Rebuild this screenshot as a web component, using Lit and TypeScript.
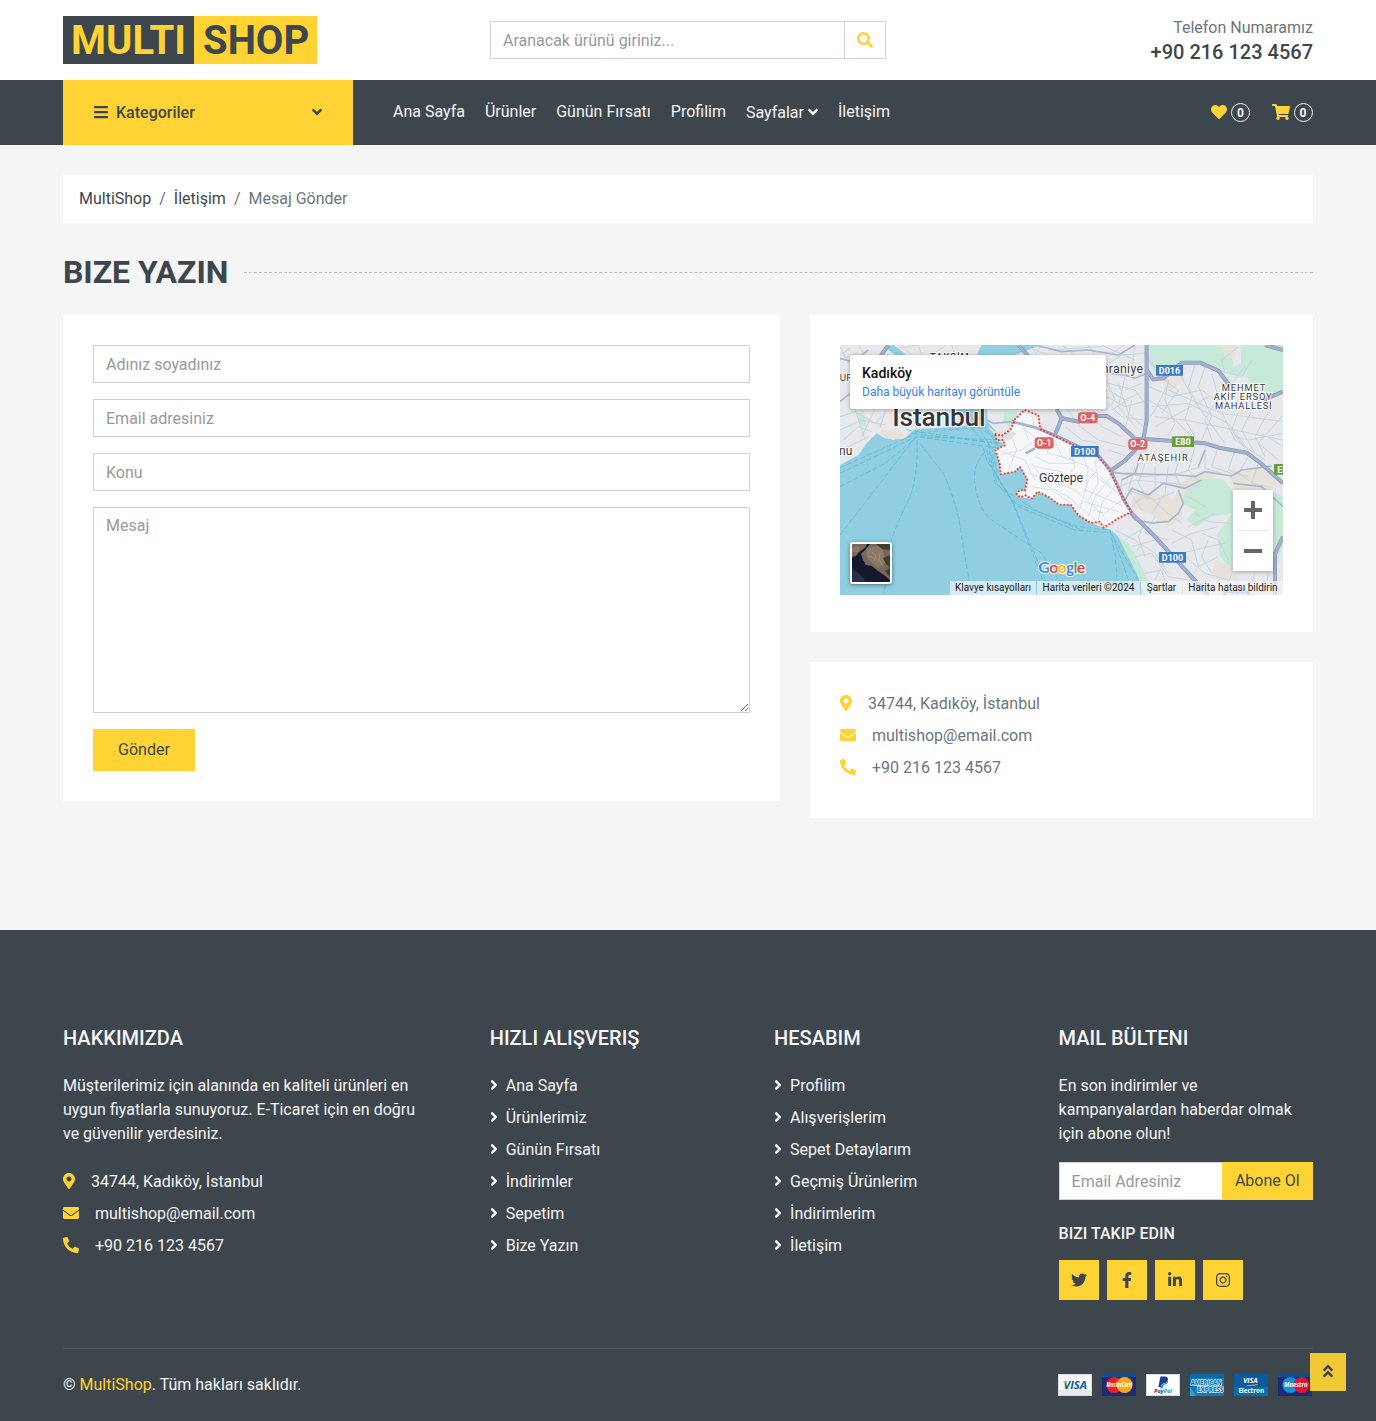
import { LitElement, html, svg, css } from "lit";
import { customElement, property } from "lit/decorators.js";

interface Glyph { w: number; d: string }

const GLYPHS: Record<string, Glyph> = {
  bars: { w: 448, d: "M16 132h416c8.837 0 16-7.163 16-16V76c0-8.837-7.163-16-16-16H16C7.163 60 0 67.163 0 76v40c0 8.837 7.163 16 16 16zm0 160h416c8.837 0 16-7.163 16-16v-40c0-8.837-7.163-16-16-16H16c-8.837 0-16 7.163-16 16v40c0 8.837 7.163 16 16 16zm0 160h416c8.837 0 16-7.163 16-16v-40c0-8.837-7.163-16-16-16H16c-8.837 0-16 7.163-16 16v40c0 8.837 7.163 16 16 16z" },
  search: { w: 512, d: "M505 442.7L405.3 343c-4.5-4.5-10.6-7-17-7H372c27.6-35.3 44-79.7 44-128C416 93.1 322.9 0 208 0S0 93.1 0 208s93.1 208 208 208c48.3 0 92.7-16.4 128-44v16.3c0 6.4 2.5 12.5 7 17l99.7 99.7c9.4 9.4 24.6 9.4 33.9 0l28.3-28.3c9.4-9.4 9.4-24.6.1-34zM208 336c-70.7 0-128-57.2-128-128 0-70.7 57.2-128 128-128 70.7 0 128 57.2 128 128 0 70.7-57.2 128-128 128z" },
  down: { w: 320, d: "M143 352.3L7 216.3c-9.4-9.4-9.4-24.6 0-33.9l22.6-22.6c9.4-9.4 24.6-9.4 33.9 0l96.4 96.4 96.4-96.4c9.4-9.4 24.6-9.4 33.9 0l22.6 22.6c9.4 9.4 9.4 24.6 0 33.9l-136 136c-9.2 9.4-24.4 9.4-33.8 0z" },
  right: { w: 256, d: "M224.3 273l-136 136c-9.4 9.4-24.6 9.4-33.9 0l-22.6-22.6c-9.4-9.4-9.4-24.6 0-33.9l96.4-96.4-96.4-96.4c-9.4-9.4-9.4-24.6 0-33.9L54.3 103c9.4-9.4 24.6-9.4 33.9 0l136 136c9.5 9.4 9.5 24.6.1 34z" },
  heart: { w: 512, d: "M462.3 62.6C407.5 15.9 326 24.3 275.7 76.2L256 96.5l-19.7-20.3C186.1 24.3 104.5 15.9 49.7 62.6c-62.8 53.6-66.1 149.8-9.9 207.9l193.5 199.8c12.5 12.9 32.8 12.9 45.3 0l193.5-199.8c56.3-58.1 53-154.3-9.8-207.9z" },
  cart: { w: 576, d: "M528.12 301.319l47.273-208C578.806 78.301 567.391 64 551.99 64H159.208l-9.166-44.81C147.758 8.021 137.93 0 126.529 0H24C10.745 0 0 10.745 0 24v16c0 13.255 10.745 24 24 24h69.883l70.248 343.435C147.325 417.1 136 435.222 136 456c0 30.928 25.072 56 56 56s56-25.072 56-56c0-15.674-6.447-29.835-16.824-40h209.647C430.447 426.165 424 440.326 424 456c0 30.928 25.072 56 56 56s56-25.072 56-56c0-22.172-12.888-41.332-31.579-50.405l5.517-24.276c3.413-15.018-8.002-29.319-23.403-29.319H218.117l-6.545-32h293.145c11.206 0 20.92-7.754 23.403-18.681z" },
  marker: { w: 384, d: "M172.268 501.67C26.97 291.031 0 269.413 0 192 0 85.961 85.961 0 192 0s192 85.961 192 192c0 77.413-26.97 99.031-172.268 309.67-9.535 13.774-29.93 13.773-39.464 0zM192 272c44.183 0 80-35.817 80-80s-35.817-80-80-80-80 35.817-80 80 35.817 80 80 80z" },
  mail: { w: 512, d: "M502.3 190.8c3.9-3.1 9.7-.2 9.7 4.7V400c0 26.5-21.5 48-48 48H48c-26.5 0-48-21.5-48-48V195.6c0-5 5.7-7.8 9.7-4.7 22.4 17.4 52.1 39.5 154.1 113.6 21.1 15.4 56.7 47.8 92.2 47.6 35.7.3 72-32.8 92.3-47.6 102-74.1 131.6-96.3 154-113.7zM256 320c23.2.4 56.6-29.2 73.4-41.4 132.7-96.3 142.8-104.7 173.4-128.7 5.8-4.5 9.2-11.5 9.2-18.9v-19c0-26.5-21.5-48-48-48H48c-26.5 0-48 21.5-48 48v19c0 7.4 3.4 14.3 9.2 18.9 30.6 23.9 40.7 32.4 173.4 128.7 16.8 12.2 50.2 41.8 73.4 41.4z" },
  phone: { w: 512, d: "M497.39 361.8l-112-48a24 24 0 0 0-28 6.9l-49.6 60.6A370.66 370.66 0 0 1 130.6 204.11l60.6-49.6a23.94 23.94 0 0 0 6.9-28l-48-112A24.16 24.16 0 0 0 122.6.61l-104 24A24 24 0 0 0 0 48c0 256.5 207.9 464 464 464a24 24 0 0 0 23.4-18.6l24-104a24.29 24.29 0 0 0-14.01-27.6z" },
  twitter: { w: 512, d: "M459.37 151.716c.325 4.548.325 9.097.325 13.645 0 138.72-105.583 298.558-298.558 298.558-59.452 0-114.68-17.219-161.137-47.106 8.447.974 16.568 1.299 25.34 1.299 49.055 0 94.213-16.568 130.274-44.832-46.132-.975-84.792-31.188-98.112-72.772 6.498.974 12.995 1.624 19.818 1.624 9.421 0 18.843-1.3 27.614-3.573-48.081-9.747-84.143-51.98-84.143-102.985v-1.299c13.969 7.797 30.214 12.67 47.431 13.319-28.264-18.843-46.781-51.005-46.781-87.391 0-19.492 5.197-37.36 14.294-52.954 51.655 63.675 129.3 105.258 216.365 109.807-1.624-7.797-2.599-15.918-2.599-24.04 0-57.828 46.782-104.934 104.934-104.934 30.213 0 57.502 12.67 76.67 33.137 23.715-4.548 46.456-13.32 66.599-25.34-7.798 24.366-24.366 44.833-46.132 57.827 21.117-2.273 41.584-8.122 60.426-16.243-14.292 20.791-32.161 39.308-52.628 54.253z" },
  facebook: { w: 320, d: "M279.14 288l14.22-92.66h-88.91v-60.13c0-25.35 12.42-50.06 52.24-50.06h40.42V6.26S260.43 0 225.36 0c-73.22 0-121.08 44.38-121.08 124.72v70.62H22.89V288h81.39v224h100.17V288z" },
  linkedin: { w: 448, d: "M100.28 448H7.4V148.9h92.88zM53.79 108.1C24.09 108.1 0 83.5 0 53.8a53.79 53.79 0 0 1 107.58 0c0 29.7-24.1 54.3-53.79 54.3zM447.9 448h-92.68V302.4c0-34.7-.7-79.2-48.29-79.2-48.29 0-55.69 37.7-55.69 76.7V448h-92.78V148.9h89.08v40.8h1.3c12.4-23.5 42.69-48.3 87.88-48.3 94 0 111.28 61.9 111.28 142.3V448z" },
  instagram: { w: 448, d: "M224.1 141c-63.6 0-114.9 51.3-114.9 114.9s51.3 114.9 114.9 114.9S339 319.5 339 255.9 287.7 141 224.1 141zm0 189.6c-41.1 0-74.7-33.5-74.7-74.7s33.5-74.7 74.7-74.7 74.7 33.5 74.7 74.7-33.6 74.7-74.7 74.7zm146.4-194.3c0 14.9-12 26.8-26.8 26.8-14.9 0-26.8-12-26.8-26.8s12-26.8 26.8-26.8 26.8 12 26.8 26.8zm76.1 27.2c-1.7-35.9-9.9-67.7-36.2-93.9-26.2-26.2-58-34.4-93.9-36.2-37-2.1-147.9-2.1-184.9 0-35.8 1.7-67.6 9.9-93.9 36.1s-34.4 58-36.2 93.9c-2.1 37-2.1 147.9 0 184.9 1.7 35.9 9.9 67.7 36.2 93.9s58 34.4 93.9 36.2c37 2.1 147.9 2.1 184.9 0 35.9-1.7 67.7-9.9 93.9-36.2 26.2-26.2 34.4-58 36.2-93.9 2.1-37 2.1-147.8 0-184.8zM398.8 388c-7.8 19.6-22.9 34.7-42.6 42.6-29.5 11.7-99.5 9-132.1 9s-102.7 2.6-132.1-9c-19.6-7.8-34.7-22.9-42.6-42.6-11.7-29.5-9-99.5-9-132.1s-2.6-102.7 9-132.1c7.8-19.6 22.9-34.7 42.6-42.6 29.5-11.7 99.5-9 132.1-9s102.7-2.6 132.1 9c19.6 7.8 34.7 22.9 42.6 42.6 11.7 29.5 9 99.5 9 132.1s2.7 102.7-9 132.1z" },
  up2: { w: 320, d: "M177 255.7l136 136c9.4 9.4 9.4 24.6 0 33.9l-22.6 22.6c-9.4 9.4-24.6 9.4-33.9 0L160 351.9l-96.4 96.4c-9.4 9.4-24.6 9.4-33.9 0L7 425.7c-9.4-9.4-9.4-24.6 0-33.9l136-136c9.4-9.5 24.6-9.5 34-.1zm-34-192L7 199.7c-9.4 9.4-9.4 24.6 0 33.9l22.6 22.6c9.4 9.4 24.6 9.4 33.9 0l96.4-96.4 96.4 96.4c9.4 9.4 24.6 9.4 33.9 0l22.6-22.6c9.4-9.4 9.4-24.6 0-33.9l-136-136c-9.2-9.4-24.4-9.4-33.8 0z" },
};

@customElement("ms-icon")
class MsIcon extends LitElement {
  @property() name = "";
  static styles = css`
    :host { display: inline-block; line-height: 1; vertical-align: -2px; padding-bottom: 2px; }
    .glyph { display: block; height: 16px; fill: currentColor; overflow: visible; }
  `;
  render() {
    const g = GLYPHS[this.name];
    return html`<svg class="glyph" viewBox="0 0 ${g.w} 512" width=${g.w / 32} height="16"><path d=${g.d}></path></svg>`;
  }
}

const DISTRICT =
  "M482 282 L500 288 L527 268 L540 238 L568 210 L590 218 L610 226 L616 268 L664 290 L712 314 L790 350 L820 385 L840 425 L862 470 L889 516 L850 535 L806 563 L794 545 L768 549 L730 526 L708 495 L672 494 L640 470 L608 455 L590 476 L572 466 L556 472 L545 462 L555 450 L570 452 L577 418 L555 381 L540 395 L497 403 L494 370 L481 330 L510 316 L505 300 L484 300 Z";

const STREETS = [
  "M15 60L60 40L120 60M20 115L45 90M15 230L60 215L120 250L160 210M25 300L70 260L110 275M15 270L80 240L150 255M60 207L90 300M120 207L80 290M15 330L60 310L100 290M150 215L135 262M190 25L250 15L260 45M290 45L330 18M15 20L40 70M70 15L90 45M200 15L230 45M350 15L360 45M15 45L45 25",
  "M560 15L640 45M620 15L600 45M680 15L720 45M640 30L800 20M760 15L780 45M820 45L870 15M800 15L900 60M815 75L860 45L930 40M820 130L900 150L930 190M815 170L870 200L925 185M820 190L860 230L925 240M815 120L840 180L815 210M850 130L880 220L925 260M870 110L850 200L900 260M760 210L800 260L860 290M700 210L720 240M730 255L790 300L870 320M690 260L740 300L790 310M870 150L920 130M890 180L870 270M820 150L870 180L910 160M830 210L880 180M900 20L890 80L925 90",
  "M942 60L1000 130L960 210L945 230M942 140L1010 170L1100 150L1140 180M942 180L1000 220L1080 300M950 200L1060 190L1180 250L1240 330M960 230L1050 240L1150 260L1344 300M1000 120L990 180L1020 250L1000 290M1040 110L1070 170L1050 240L1080 290M1080 75L1060 140L1090 200L1170 310M1110 80L1090 140L1130 230L1100 300M1130 100L1150 170L1110 240L1130 300M1000 150L1160 220L1344 245M1160 215L1200 300L1290 360M1210 215L1190 270L1230 325M1250 215L1220 270L1260 340M1300 215L1260 290L1290 350M1344 225L1270 310L1330 360M1170 100L1160 60L1210 20M1150 90L1220 110L1250 60M1190 130L1230 80M1120 170L1050 210L960 260M1344 280L1240 300L1200 290M1344 320L1280 280M960 100L1030 150L980 220",
  "M820 330L880 350L940 330M850 400L930 410L1030 400L1100 380M830 450L900 420L1010 430L1100 440M860 420L850 500M900 380L880 450L920 510M930 370L910 430L940 480M960 380L960 450L900 490M1000 380L990 460L950 520M1040 330L1020 400L1040 450M1080 320L1060 390L1100 430M1110 320L1110 385L1160 400M1150 320L1130 380L1190 400M1200 330L1180 390L1240 410M1240 350L1210 400L1270 440M1270 370L1250 430L1300 440M880 450L960 480L1020 455M890 500L930 460L1000 520L1040 550M960 530L930 580L1000 600M840 570L900 600L960 640L1000 700M870 600L930 560M890 620L960 600L1000 640L960 720M900 650L950 640L1000 710L1060 720M930 700L980 690L1000 760M1010 570L1070 600L1090 680M1060 560L1100 540L1140 520M1100 580L1150 600L1180 660M1010 610L1070 580L1150 560M1040 640L1120 620L1170 610M1050 650L1110 700L1180 720M1120 600L1100 650L1130 700M1150 650L1090 680L1040 760M1190 700L1170 760M1260 700L1240 760M1300 700L1290 760M1080 520L1120 545L1190 550M1110 500L1060 470M930 545L910 590L930 650",
];

const DISTRICT_STREETS =
  "M497 345L560 330L600 300M520 390L545 330L530 290M490 330L530 345L570 360L600 420M560 260L610 300L650 330M560 240L580 300M590 225L600 270M620 290L640 340L720 360M660 300L680 350L760 380L830 440M700 320L720 380L700 410M740 340L760 390L750 460M780 360L790 430L760 480M800 375L760 420L730 520M830 410L780 470L760 530M840 440L800 490L790 540M860 480L810 520L770 510M600 350L640 370L720 370M590 370L640 440L700 470L780 540M580 400L640 420L720 450L800 520L820 545M590 440L650 450L710 490M740 445L870 500M770 400L850 460M745 485L850 515M600 380L680 395";

const FERRY = [
  "M15 383L240 282L500 310", "M15 400L245 290L495 325", "M15 440L150 370L248 290L505 300", "M15 585L235 300",
  "M246 300Q250 400 225 470Q190 540 165 610M152 735L145 765", "M255 310L325 400Q370 500 380 590L402 722",
  "M450 335Q410 380 420 430Q430 510 470 540L620 640L700 765", "M445 325L455 360L530 480L640 765", "M455 330L465 370L535 490L650 765",
  "M470 320L490 420L550 500L720 570L820 578", "M470 345L485 430L540 490L730 560L820 570", "M460 310L480 430L600 510L740 570",
  "M215 270L500 312", "M230 280L430 262L500 305", "M395 250L460 320", "M420 215L490 320", "M400 215L470 325",
  "M825 572L840 640L850 765", "M830 580L860 660L895 765", "M825 575L870 650L915 730",
];

const BADGES = [
  { x: 963, y: 75, w: 81, h: 32, t: "D016", c: "#3b78c8", r: 1 },
  { x: 708, y: 318, w: 83, h: 32, t: "D100", c: "#3b78c8", r: 1 },
  { x: 972, y: 636, w: 81, h: 32, t: "D100", c: "#3b78c8", r: 1 },
  { x: 1165, y: 754, w: 81, h: 32, t: "D100", c: "#7d93cf", r: 1 },
  { x: 1011, y: 289, w: 66, h: 32, t: "E80", c: "#689f38", r: 1 },
  { x: 1317, y: 372, w: 66, h: 32, t: "E80", c: "#689f38", r: 1 },
  { x: 729, y: 217, w: 59, h: 33, t: "O-4", c: "#dc6064", r: 10 },
  { x: 599, y: 292, w: 57, h: 34, t: "O-1", c: "#dc6064", r: 10 },
  { x: 880, y: 296, w: 57, h: 33, t: "O-2", c: "#dc6064", r: 10 },
];

@customElement("ms-map")
class MsMap extends LitElement {
  static styles = css`
    :host { display: block; position: relative; width: 443px; height: 250px; overflow: hidden; font-family: Roboto, sans-serif; }
    .canvas { display: block; width: 443px; height: 250px; }
    .street { fill: none; stroke: #c8d1dc; stroke-width: 2.8; }
    .inner { fill: none; stroke: #d6dde7; stroke-width: 2.6; }
    .minor { fill: none; stroke: #aab7cf; stroke-width: 5; stroke-linejoin: round; }
    .major { fill: none; stroke: #8495b8; stroke-width: 12; stroke-linejoin: round; }
    .major-in { fill: none; stroke: #a3b1ce; stroke-width: 8; stroke-linejoin: round; }
    .ferry { fill: none; stroke: #5fb9d3; stroke-width: 2.4; stroke-dasharray: 16 6; }
    .label { font-family: Roboto, sans-serif; fill: #33373b; paint-order: stroke; stroke: #fff; stroke-width: 6px; stroke-linejoin: round; }
    .badge { font-family: Roboto, sans-serif; font-size: 27px; font-weight: 700; fill: #fff; text-anchor: middle; }
    .place { position: absolute; left: 10px; top: 10px; width: 256px; height: 54px; box-sizing: border-box; padding: 9px 12px; background: #fff; border-radius: 2px; box-shadow: 0 1px 4px rgba(0, 0, 0, .3); }
    .place-name { font-size: 14px; font-weight: 500; line-height: 19px; color: #111; }
    .place-link { font-size: 12px; line-height: 18px; color: #3a80ec; }
    .thumb { position: absolute; left: 10px; top: 197px; width: 38px; height: 38px; border: 2px solid #fff; border-radius: 3px; box-shadow: 0 1px 4px rgba(0, 0, 0, .45); overflow: hidden; }
    .thumb-art { display: block; width: 38px; height: 38px; }
    .zoom { position: absolute; left: 393px; top: 145px; width: 40px; height: 81px; background: #fff; box-shadow: 0 1px 4px rgba(0, 0, 0, .3); }
    .zoom-art { display: block; width: 40px; height: 81px; }
    .legal { position: absolute; right: 0; bottom: 0; display: flex; height: 14px; width: 333px; font-size: 10px; line-height: 14px; color: #222; gap: 1px; }
    .legal-item { background: rgba(245, 245, 245, .7); text-align: center; white-space: nowrap; }
    .w1 { width: 86px; } .w2 { width: 103px; } .w3 { width: 41px; } .w4 { width: 100px; }
  `;

  render() {
    return html`
      <svg class="canvas" viewBox="15 15 1329 750" preserveAspectRatio="none">
        <defs><clipPath id="district"><path d=${DISTRICT}></path></clipPath></defs>
        <rect x="15" y="15" width="1329" height="750" fill="#e6e8ec"></rect>
        <path fill="#c7ead8" d="M944 15H1185L1195 75L1180 95L1110 68L1050 68L1020 85L990 115L960 100L942 70ZM1218 15H1344V150L1310 175L1260 150L1235 110L1180 105L1182 85L1218 70ZM1050 450L1100 415L1165 418L1192 450L1192 520L1130 530L1085 560L1055 540L1080 510L1040 490ZM1192 520L1145 585L1155 650L1190 690H1320L1344 610V470L1315 455V690H1192ZM508 215L545 215L548 245L525 262L505 245ZM65 225L85 210L95 258L75 262ZM850 590L880 610L905 650L960 765H930L885 680ZM905 625L922 608L920 625L905 635ZM640 395L665 390L672 402ZM735 460L750 445L745 465Z"></path>
        <path fill="#e6e2da" d="M968 110L1030 90L1048 115L1010 160ZM890 475L940 455L1035 480L1025 545L990 548L940 520L890 500ZM1035 430L1100 390L1150 410L1100 415L1045 460L1040 540L1000 560L990 550ZM1140 660L1194 680L1210 720L1150 720L1130 700ZM1180 400L1290 380L1330 430L1300 450H1195ZM1150 15L1205 15L1200 60L1175 55Z"></path>
        ${STREETS.map((d) => svg`<path class="street" d=${d}></path>`)}
        <path class="minor" d="M15 55L50 65L80 90M15 185L45 160M100 30L80 45M820 100L870 105L900 115L935 100M820 395L860 400L1030 405L1080 410L1110 395L1190 408L1220 390L1310 378M860 420L900 400L910 370M870 480L890 445L940 465L985 430L1050 445L1100 420M1030 450L1045 490L1030 520L1000 545L960 548M1195 430L1280 440L1344 500M860 490L900 540L960 550M600 15L680 35L760 30L850 45L900 15M1090 380L1110 330"></path>
        <path fill="#90cfe2" d="M15 375L70 345L95 310L125 280L150 295L205 297L240 268L340 262L400 255L375 240L365 205H455L458 245L482 272L484 300L510 315L481 330L494 370L497 403L540 395L555 381L577 418L570 452L555 450L545 462L556 472L590 476L608 455L640 470L672 494L708 495L730 526L768 549L806 563L825 568L850 590L885 660L905 700L930 765H15ZM440 15L560 15L500 45H425ZM540 15H618L540 45H450ZM150 22L175 15L215 45H180Z"></path>
        <path fill="#e6e2da" d="M135 270L195 272L210 290L175 300L145 292ZM460 260L482 275L520 270L505 290L484 290Z"></path>
        ${FERRY.map((d) => svg`<path class="ferry" d=${d}></path>`)}
        <path class="major" d="M160 15L137 48M550 15L580 48M935 15V240L925 300M530 245L600 262L680 297L790 350L825 390L865 480L890 520L960 590L1080 722L1120 765M665 208L680 235L735 246M785 228L815 228L850 250L900 296L940 298L1110 310L1160 325L1235 338L1280 372L1344 430M680 235L660 285M905 325L870 362L830 390M935 90L955 118L985 115L1040 68L1095 68L1150 92L1185 138M1290 15L1344 30M1285 180L1344 155M1344 590L1320 640V765"></path>
        <path class="minor" d="M455 240L475 250L530 245"></path>
        <path class="major-in" d="M160 15L137 48M550 15L580 48M935 15V240L925 300M530 245L600 262L680 297L790 350L825 390L865 480L890 520L960 590L1080 722L1120 765M665 208L680 235L735 246M785 228L815 228L850 250L900 296L940 298L1110 310L1160 325L1235 338L1280 372L1344 430M680 235L660 285M905 325L870 362L830 390M935 90L955 118L985 115L1040 68L1095 68L1150 92L1185 138M1290 15L1344 30M1285 180L1344 155M1344 590L1320 640V765"></path>
        <path d=${DISTRICT} fill="#f6f7f9"></path>
        <g clip-path="url(#district)">
          <path class="inner" d=${DISTRICT_STREETS}></path>
          <path d="M483 290L520 270L545 280L525 300L490 305Z" fill="#dfe0e4"></path>
          <path class="major-in" d="M530 245L600 262L680 297L790 350L825 390L865 480L890 520M572 340L600 325"></path>
        </g>
        <path d=${DISTRICT} fill="none" stroke="#e8453c" stroke-width="6.4" stroke-linecap="round" stroke-dasharray="0.1 10.6"></path>
        <text class="label" x="285" y="60" font-size="28" font-weight="500" letter-spacing="3">TAKSİM</text>
        <text class="label" x="14" y="123" font-size="29" letter-spacing="1">UR</text>
        <text class="label" x="12" y="345" font-size="36">nu</text>
        <text class="label" x="172" y="259" font-size="79" font-weight="500" textLength="280">İstanbul</text>
        <text class="label" x="788" y="100" font-size="37" textLength="136">mraniye</text>
        <text class="label" x="612" y="427" font-size="37" textLength="132">Göztepe</text>
        <text class="label" x="908" y="364" font-size="28" textLength="150">ATAŞEHİR</text>
        <text class="label" x="1160" y="154" font-size="28" textLength="131">MEHMET</text>
        <text class="label" x="1136" y="181" font-size="28" textLength="174">AKİF ERSOY</text>
        <text class="label" x="1140" y="208" font-size="28" textLength="170">MAHALLESİ</text>
        ${BADGES.map((b) => svg`<rect x=${b.x} y=${b.y} width=${b.w} height=${b.h} rx=${b.r} fill=${b.c}></rect>
          <text class="badge" x=${b.x + b.w / 2} y=${b.y + 25.5}>${b.t}</text>`)}
        <text x="610" y="700" font-family="Lato, sans-serif" font-size="48" font-weight="700" textLength="141" paint-order="stroke" stroke="#fff" stroke-width="6"><tspan fill="#4285f4">G</tspan><tspan fill="#ea4335">o</tspan><tspan fill="#fbbc05">o</tspan><tspan fill="#4285f4">g</tspan><tspan fill="#34a853">l</tspan><tspan fill="#ea4335">e</tspan></text>
      </svg>
      <div class="place">
        <div class="place-name">Kadıköy</div>
        <div class="place-link">Daha büyük haritayı görüntüle</div>
      </div>
      <div class="thumb">
        <svg class="thumb-art" viewBox="0 0 38 38">
          <rect width="38" height="38" fill="#76685b"></rect>
          <path d="M14 4L30 2L34 18L26 24L15 15ZM0 4L8 2L7 9L0 8Z" fill="#8b7866"></path>
          <path d="M24 0H38V6L30 5ZM31 14L38 11V24L34 20ZM33 27L38 24V33Z" fill="#39402f"></path>
          <path d="M15 0H18L14 5L9 10L11 16L14 21L20 22L26 27L32 31L38 36V38H0V13L4 12L7 8L13 4Z" fill="#141a2c"></path>
          <path d="M0 24L10 32L14 38H0Z" fill="#282d4a"></path>
          <path d="M20 8L24 12L22 17M28 8L27 16L31 22M17 12L25 15" stroke="#a38f7b" stroke-width="1" fill="none"></path>
        </svg>
      </div>
      <div class="zoom">
        <svg class="zoom-art" viewBox="0 0 40 81">
          <path d="M11 18H18V11H22V18H29V22H22V29H18V22H11ZM11 59H29V63H11Z" fill="#666"></path>
          <rect x="5" y="40" width="30" height="1" fill="#e6e6e6"></rect>
        </svg>
      </div>
      <div class="legal">
        <span class="legal-item w1">Klavye kısayolları</span>
        <span class="legal-item w2">Harita verileri ©2024</span>
        <span class="legal-item w3">Şartlar</span>
        <span class="legal-item w4">Harita hatası bildirin</span>
      </div>
    `;
  }
}

@customElement("ms-payments")
class MsPayments extends LitElement {
  static styles = css`
    :host { display: block; }
    .cards { display: flex; gap: 10px; width: 255px; overflow: hidden; }
    .card { flex: none; display: block; width: 34px; height: 22px; font-family: "Open Sans", sans-serif; }
  `;
  render() {
    return html`<div class="cards">
      <svg class="card" viewBox="0 0 34 22">
        <rect width="34" height="22" fill="#f4f5f7"></rect><path d="M0 16H34V22H0Z" fill="#e6e8ec"></path>
        <rect x=".5" y=".5" width="33" height="21" fill="none" stroke="#dcdcdf"></rect>
        <text x="5.5" y="14.8" font-size="10.5" font-weight="700" font-style="italic" fill="#155b9a" textLength="23.5" lengthAdjust="spacingAndGlyphs">VISA</text>
        <path d="M5 7.3L8 7.3L9 10Z" fill="#e9a42b"></path>
      </svg>
      <svg class="card" viewBox="0 0 34 22">
        <rect width="34" height="22" fill="#1e2a74"></rect><rect width="34" height="3" fill="#164a89"></rect>
        <circle cx="12.4" cy="11" r="8" fill="#f11d1d"></circle><circle cx="22.6" cy="11" r="8" fill="#fba619"></circle>
        <text x="4.6" y="13.3" font-size="6.3" font-weight="700" font-style="italic" fill="#fff" textLength="25.4" lengthAdjust="spacingAndGlyphs">MasterCard</text>
      </svg>
      <svg class="card" viewBox="0 0 34 22">
        <rect width="34" height="22" fill="#fff"></rect><rect x=".5" y=".5" width="33" height="21" fill="none" stroke="#d9d9df"></rect>
        <path d="M14.4 2.4H19.4Q23 3 21.6 6.8Q20.4 9.6 16.8 9.4L16 13H12.4Z" fill="#1b3f86"></path>
        <path d="M21.8 5.4Q23 9.8 18.4 10.8H17.4L16.6 14.4H14.2L15.2 10Q20.6 10 21.8 5.4Z" fill="#1a9bd8"></path>
        <text x="8" y="19.2" font-size="5.8" font-weight="700" font-style="italic" textLength="18" lengthAdjust="spacingAndGlyphs"><tspan fill="#1b3f86">Pay</tspan><tspan fill="#1a9bd8">Pal</tspan></text>
      </svg>
      <svg class="card" viewBox="0 0 34 22">
        <rect width="34" height="22" fill="#0d7bb8"></rect><rect width="34" height="4" fill="#0a66a4"></rect><path d="M0 13L6 22H0Z" fill="#3b9bcb"></path>
        <g font-size="7" font-weight="700" fill="#0d6dab" stroke="#d5edf8" stroke-width="1.3" paint-order="stroke">
          <text x="0.8" y="11.2" textLength="31" lengthAdjust="spacingAndGlyphs">AMERICAN</text>
          <text x="7" y="18.4" textLength="26.4" lengthAdjust="spacingAndGlyphs">EXPRESS</text>
        </g>
      </svg>
      <svg class="card" viewBox="0 0 34 22">
        <rect width="34" height="22" fill="#0b5a9e"></rect><path d="M0 13H34V22H0Z" fill="#0a6cab"></path>
        <text x="9.2" y="9.4" font-size="6.8" font-weight="700" font-style="italic" fill="#fff" textLength="14.6" lengthAdjust="spacingAndGlyphs">VISA</text>
        <path d="M13 11.6Q20 12 24 10.4Q20 11 13 11.6Z" fill="#f0a52b" stroke="#f0a52b" stroke-width=".5"></path>
        <text x="4.4" y="18.9" font-size="6.2" font-weight="700" fill="#fff" textLength="25.6" lengthAdjust="spacingAndGlyphs">Electron</text>
      </svg>
      <svg class="card" viewBox="0 0 34 22">
        <rect width="34" height="22" fill="#1e2a74"></rect><rect width="34" height="3" fill="#164a89"></rect>
        <circle cx="12.4" cy="11" r="8" fill="#1193d6"></circle><circle cx="23.6" cy="11" r="8" fill="#dd1638"></circle>
        <text x="6" y="13.4" font-size="6.6" font-weight="700" font-style="italic" fill="#fff" textLength="23.5" lengthAdjust="spacingAndGlyphs">Maestro</text>
      </svg>
    </div>`;
  }
}

const QUICK = ["Ana Sayfa", "Ürünlerimiz", "Günün Fırsatı", "İndirimler", "Sepetim", "Bize Yazın"];
const ACCOUNT = ["Profilim", "Alışverişlerim", "Sepet Detaylarım", "Geçmiş Ürünlerim", "İndirimlerim", "İletişim"];

@customElement("app-root")
class AppRoot extends LitElement {
  static styles = css`
    :host { display: block; position: relative; width: 1376px; min-height: 1421px; background: #f5f5f5; font-family: Roboto, sans-serif; font-size: 16px; line-height: 24px; color: #6c757d; }
    * { box-sizing: border-box; }
    input, textarea, button { font: inherit; margin: 0; border-radius: 0; outline: none; }
    ::placeholder { color: #999; opacity: 1; }
    .top { display: grid; grid-template-columns: 427px 396px 1fr; align-items: center; height: 80px; padding: 0 63px; background: #fff; }
    .logo { display: flex; height: 48px; font-size: 40px; font-weight: 700; line-height: 48px; }
    .logo-a { width: 131px; padding: 1px 0 0 8px; background: #3d464d; color: #ffd333; line-height: 47px; }
    .logo-b { width: 123px; padding: 1px 0 0 9px; background: #ffd333; color: #3d464d; line-height: 47px; }
    .search { display: flex; }
    .field { display: block; width: 100%; height: 38px; padding: 6px 12px; border: 1px solid #cfd2de; background: #fff; color: #495057; }
    .search-btn { display: flex; justify-content: center; align-items: center; flex: none; width: 42px; height: 38px; margin-left: -1px; border: 1px solid #cfd2de; padding-top: 1px; color: #ffd333; }
    .tel { text-align: right; }
    .tel-no { font-size: 20px; font-weight: 500; color: #3d464d; }
    .nav { display: flex; align-items: center; height: 65px; padding: 0 63px; background: #3d464d; color: #f5f5f5; }
    .cats { display: flex; align-items: center; justify-content: space-between; width: 290px; height: 65px; padding: 0 31px; background: #ffd333; color: #3d464d; font-weight: 500; }
    .cats-label { display: flex; align-items: center; gap: 8px; }
    .links { display: flex; gap: 20px; margin-left: 40px; }
    .links-item { padding-bottom: 2px; }
    .links-menu { display: flex; align-items: center; gap: 4px; padding-top: 1px; }
    .counts { display: flex; align-items: center; gap: 21.5px; margin: 0 .5px 0 auto; }
    .count { display: flex; align-items: center; gap: 4px; color: #ffd333; }
    .count-badge { width: 19px; height: 19px; border: 1px solid #f5f5f5; border-radius: 50%; font-size: 12px; font-weight: 700; line-height: 18px; text-align: center; color: #f5f5f5; }
    .main { padding: 30px 63px 112px; }
    .crumbs { display: flex; gap: 8px; height: 48px; padding: 12px 16px; background: #fff; }
    .crumbs-link { color: #3d464d; }
    .title { display: flex; align-items: center; gap: 16px; margin: 30px 0 23.6px; font-size: 32px; font-weight: 700; line-height: 38.4px; color: #3d464d; }
    .title-text { width: 165px; white-space: nowrap; letter-spacing: -.05px; }
    .title-line { flex: 1; border-top: 1px dashed #bcc2c8; }
    .cols { display: flex; align-items: flex-start; gap: 30px; }
    .panel { background: #fff; padding: 30px; }
    .form { display: flex; flex-direction: column; align-items: flex-start; gap: 16px; width: 717px; }
    .area { height: 206px; resize: vertical; }
    .send { width: 102px; height: 42px; padding: 0; border: 0; background: #ffd333; color: #3d464d; }
    .side { display: flex; flex-direction: column; gap: 30px; width: 503px; }
    .map-panel { height: 317px; }
    .contact { display: flex; flex-direction: column; gap: 8px; }
    .contact-row { display: flex; align-items: center; gap: 16px; height: 24px; }
    .contact-icon { color: #ffd333; }
    .info-panel { height: 156px; }
    .foot { height: 491px; padding: 96px 63px 0; background: #3d464d; color: #f5f5f5; }
    .foot-cols { display: grid; grid-template-columns: 426.7px 284.4px 284.5px 254.4px; height: 322px; }
    .foot-head { margin-bottom: 24px; font-size: 20px; font-weight: 500; line-height: 24px; }
    .about { width: 366px; margin-bottom: 24px; }
    .flinks { display: flex; flex-direction: column; gap: 8px; }
    .flink { display: flex; align-items: center; gap: 8px; }
    .mail-text { margin-bottom: 16px; }
    .subscribe { display: flex; }
    .sub-field { width: 163px; border-right: 0; }
    .sub-btn { width: 91.4px; height: 38px; padding: 0 0 1px; border: 0; background: #ffd333; color: #3d464d; }
    .follow { margin: 24px 0 16px; font-weight: 500; line-height: 20px; }
    .social { display: flex; gap: 8px; }
    .social-btn { display: flex; align-items: center; justify-content: center; width: 40px; height: 40px; padding-top: 2px; background: #ffd333; color: #3d464d; }
    .bottom { display: flex; align-items: center; justify-content: space-between; height: 73px; border-top: 1px solid rgba(255, 255, 255, .1); }
    .brand { color: #ffd333; }
    .to-top { position: absolute; right: 30px; bottom: 30px; display: flex; align-items: center; justify-content: center; width: 36px; height: 38px; background: #f0c935; color: #3d464d; }
  `;

  private contacts() {
    const rows = [["marker", "34744, Kadıköy, İstanbul"], ["mail", "multishop@email.com"], ["phone", "+90 216 123 4567"]];
    return html`<div class="contact">${rows.map(([icon, text]) => html`
      <div class="contact-row"><ms-icon class="contact-icon" name=${icon}></ms-icon><span>${text}</span></div>`)}</div>`;
  }

  private linkList(head: string, items: string[]) {
    return html`<div>
      <div class="foot-head">${head}</div>
      <div class="flinks">${items.map((t) => html`<div class="flink"><ms-icon name="right"></ms-icon><span>${t}</span></div>`)}</div>
    </div>`;
  }

  render() {
    return html`
      <div class="top">
        <div class="logo"><span class="logo-a">MULTI</span><span class="logo-b">SHOP</span></div>
        <div class="search">
          <input class="field" placeholder="Aranacak ürünü giriniz..." />
          <div class="search-btn"><ms-icon name="search"></ms-icon></div>
        </div>
        <div class="tel"><div>Telefon Numaramız</div><div class="tel-no">+90 216 123 4567</div></div>
      </div>
      <nav class="nav">
        <div class="cats">
          <div class="cats-label"><ms-icon name="bars"></ms-icon><span>Kategoriler</span></div>
          <ms-icon name="down"></ms-icon>
        </div>
        <div class="links">
          <span class="links-item">Ana Sayfa</span><span class="links-item">Ürünler</span>
          <span class="links-item">Günün Fırsatı</span><span class="links-item">Profilim</span>
          <span class="links-menu">Sayfalar<ms-icon name="down"></ms-icon></span>
          <span class="links-item">İletişim</span>
        </div>
        <div class="counts">
          <div class="count"><ms-icon name="heart"></ms-icon><span class="count-badge">0</span></div>
          <div class="count"><ms-icon name="cart"></ms-icon><span class="count-badge">0</span></div>
        </div>
      </nav>
      <main class="main">
        <div class="crumbs">
          <span class="crumbs-link">MultiShop</span><span>/</span><span class="crumbs-link">İletişim</span><span>/</span><span>Mesaj Gönder</span>
        </div>
        <div class="title"><span class="title-text">BIZE YAZIN</span><span class="title-line"></span></div>
        <div class="cols">
          <div class="panel form">
            <input class="field" placeholder="Adınız soyadınız" />
            <input class="field" placeholder="Email adresiniz" />
            <input class="field" placeholder="Konu" />
            <textarea class="field area" placeholder="Mesaj"></textarea>
            <button class="send">Gönder</button>
          </div>
          <div class="side">
            <div class="panel map-panel"><ms-map></ms-map></div>
            <div class="panel info-panel">${this.contacts()}</div>
          </div>
        </div>
      </main>
      <footer class="foot">
        <div class="foot-cols">
          <div>
            <div class="foot-head">HAKKIMIZDA</div>
            <div class="about">Müşterilerimiz için alanında en kaliteli ürünleri en uygun fiyatlarla sunuyoruz. E-Ticaret için en doğru ve güvenilir yerdesiniz.</div>
            ${this.contacts()}
          </div>
          ${this.linkList("HIZLI ALIŞVERIŞ", QUICK)}
          ${this.linkList("HESABIM", ACCOUNT)}
          <div>
            <div class="foot-head">MAIL BÜLTENI</div>
            <div class="mail-text">En son indirimler ve kampanyalardan haberdar olmak için abone olun!</div>
            <div class="subscribe">
              <input class="field sub-field" placeholder="Email Adresiniz" />
              <button class="sub-btn">Abone Ol</button>
            </div>
            <div class="follow">BIZI TAKIP EDIN</div>
            <div class="social">${["twitter", "facebook", "linkedin", "instagram"].map((n) => html`
              <div class="social-btn"><ms-icon name=${n}></ms-icon></div>`)}</div>
          </div>
        </div>
        <div class="bottom">
          <div>© <span class="brand">MultiShop</span>. Tüm hakları saklıdır.</div>
          <ms-payments></ms-payments>
        </div>
      </footer>
      <div class="to-top"><ms-icon name="up2"></ms-icon></div>
    `;
  }
}
